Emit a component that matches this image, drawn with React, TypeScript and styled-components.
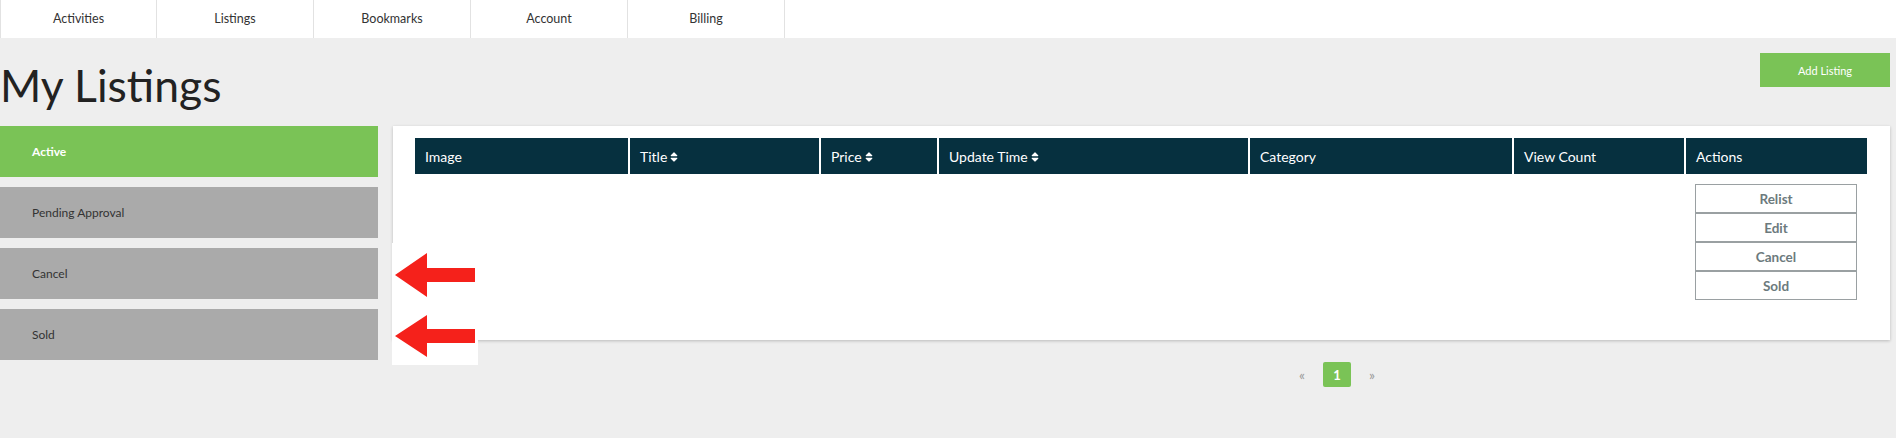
import React from 'react';
import styled, { createGlobalStyle } from 'styled-components';
import { FaSort } from 'react-icons/fa';

const GlobalStyle = createGlobalStyle`
  html, body {
    margin: 0;
    padding: 0;
    background: #eeeeee;
    font-family: Lato, "Open Sans", "Liberation Sans", sans-serif;
    color: #333;
  }
  * { box-sizing: border-box; }
`;

const GREEN = '#7ac356';
const NAVY = '#06303f';

const TopNav = styled.nav`
  display: flex;
  height: 38px;
  background: #fff;
`;

const NavItem = styled.a`
  width: 157px;
  display: flex;
  align-items: center;
  justify-content: center;
  border-right: 1px solid #e2e2e2;
  border-left: ${p => (p.$first ? '1px solid #e2e2e2' : 'none')};
  font-size: 12.5px;
  color: #333;
  text-decoration: none;
  padding-bottom: 2px;
`;

const HeaderRow = styled.div`
  display: flex;
  justify-content: space-between;
  align-items: flex-start;
  height: 88px;
`;

const PageTitle = styled.h1`
  margin: 20px 0 0 0;
  font-size: 44.5px;
  line-height: 1.2;
  font-weight: 400;
  color: #222;
`;

const GreenButton = styled.button`
  margin: 15px 6px 0 0;
  width: 130px;
  height: 34px;
  border: none;
  background: ${GREEN};
  color: #fff;
  font-family: inherit;
  font-size: 11px;
  cursor: pointer;
`;

const ContentRow = styled.div`
  position: relative;
  display: flex;
  align-items: flex-start;
  gap: 15px;
  padding-right: 6px;
`;

const Sidebar = styled.div`
  width: 378px;
  flex-shrink: 0;
  display: flex;
  flex-direction: column;
  gap: 10px;
`;

const TabButton = styled.div`
  height: 51px;
  display: flex;
  align-items: center;
  padding-left: 32px;
  font-size: 12px;
  background: ${p => (p.$active ? GREEN : '#aaaaaa')};
  color: ${p => (p.$active ? '#fff' : '#333')};
  font-weight: ${p => (p.$active ? 700 : 400)};
`;

const MainColumn = styled.div`
  flex: 1;
  display: flex;
  flex-direction: column;
`;

const Panel = styled.div`
  background: #fff;
  padding: 12px 22px 40px;
  box-shadow: 0 1px 3px rgba(0, 0, 0, 0.22);
`;

const Table = styled.table`
  width: 1452px;
  table-layout: fixed;
  border-collapse: collapse;
`;

const Th = styled.th`
  height: 36px;
  background: ${NAVY};
  color: #fff;
  text-align: left;
  padding: 0 0 0 10px;
  font-size: 14px;
  font-weight: 400;
  border-right: 2px solid #fff;
  white-space: nowrap;

  &:last-child {
    border-right: none;
  }

  svg {
    vertical-align: -1px;
    margin-left: 1px;
  }
`;

const Td = styled.td`
  padding: 10px 0 0;
  vertical-align: top;
`;

const ActionStack = styled.div`
  width: 162px;
  margin: 0 auto;
  display: flex;
  flex-direction: column;
`;

const ActionButton = styled.button`
  height: 29px;
  border: 1px solid #9aa0a2;
  background: #fff;
  color: #6c7a7d;
  font-family: inherit;
  font-weight: 700;
  font-size: 13.5px;
  cursor: pointer;
`;

const Pagination = styled.div`
  display: flex;
  align-items: center;
  gap: 18px;
  margin-top: 22px;
  padding-left: 906px;
`;

const PageArrow = styled.span`
  font-size: 14px;
  color: #999;
`;

const PageNumber = styled.span`
  width: 28px;
  height: 25px;
  border-radius: 2px;
  background: ${GREEN};
  color: #fff;
  font-weight: 700;
  font-size: 13px;
  display: flex;
  align-items: center;
  justify-content: center;
`;

const Annotation = styled.div`
  position: absolute;
  left: 392px;
  top: 117px;
  width: 86px;
  height: 122px;
  background: #fff;
`;

const columns = [
  { label: 'Image', width: 214 },
  { label: 'Title', width: 191, sort: true },
  { label: 'Price', width: 118, sort: true },
  { label: 'Update Time', width: 311, sort: true },
  { label: 'Category', width: 264 },
  { label: 'View Count', width: 172 },
  { label: 'Actions', width: 182 },
];

export default function App() {
  return (
    <>
      <GlobalStyle />
      <TopNav>
        {['Activities', 'Listings', 'Bookmarks', 'Account', 'Billing'].map((n, i) => (
          <NavItem key={n} $first={i === 0}>{n}</NavItem>
        ))}
      </TopNav>

      <HeaderRow>
        <PageTitle>My Listings</PageTitle>
        <GreenButton>Add Listing</GreenButton>
      </HeaderRow>

      <ContentRow>
        <Sidebar>
          <TabButton $active>Active</TabButton>
          <TabButton>Pending Approval</TabButton>
          <TabButton>Cancel</TabButton>
          <TabButton>Sold</TabButton>
        </Sidebar>

        <MainColumn>
          <Panel>
            <Table>
              <colgroup>
                {columns.map(c => <col key={c.label} style={{ width: c.width }} />)}
              </colgroup>
              <thead>
                <tr>
                  {columns.map(c => (
                    <Th key={c.label}>
                      {c.label}
                      {c.sort && <FaSort size={12} />}
                    </Th>
                  ))}
                </tr>
              </thead>
              <tbody>
                <tr>
                  <Td /><Td /><Td /><Td /><Td /><Td />
                  <Td>
                    <ActionStack>
                      <ActionButton>Relist</ActionButton>
                      <ActionButton>Edit</ActionButton>
                      <ActionButton>Cancel</ActionButton>
                      <ActionButton>Sold</ActionButton>
                    </ActionStack>
                  </Td>
                </tr>
              </tbody>
            </Table>
          </Panel>
          <Pagination>
            <PageArrow>«</PageArrow>
            <PageNumber>1</PageNumber>
            <PageArrow>»</PageArrow>
          </Pagination>
        </MainColumn>

        <Annotation>
          <svg width="86" height="122" viewBox="0 0 86 122">
            <polygon fill="#f5211b" points="3,32 35,10 35,25 83,25 83,39 35,39 35,54" />
            <polygon fill="#f5211b" points="3,93 35,72 35,86 83,86 83,100 35,100 35,114" />
          </svg>
        </Annotation>
      </ContentRow>
    </>
  );
}
